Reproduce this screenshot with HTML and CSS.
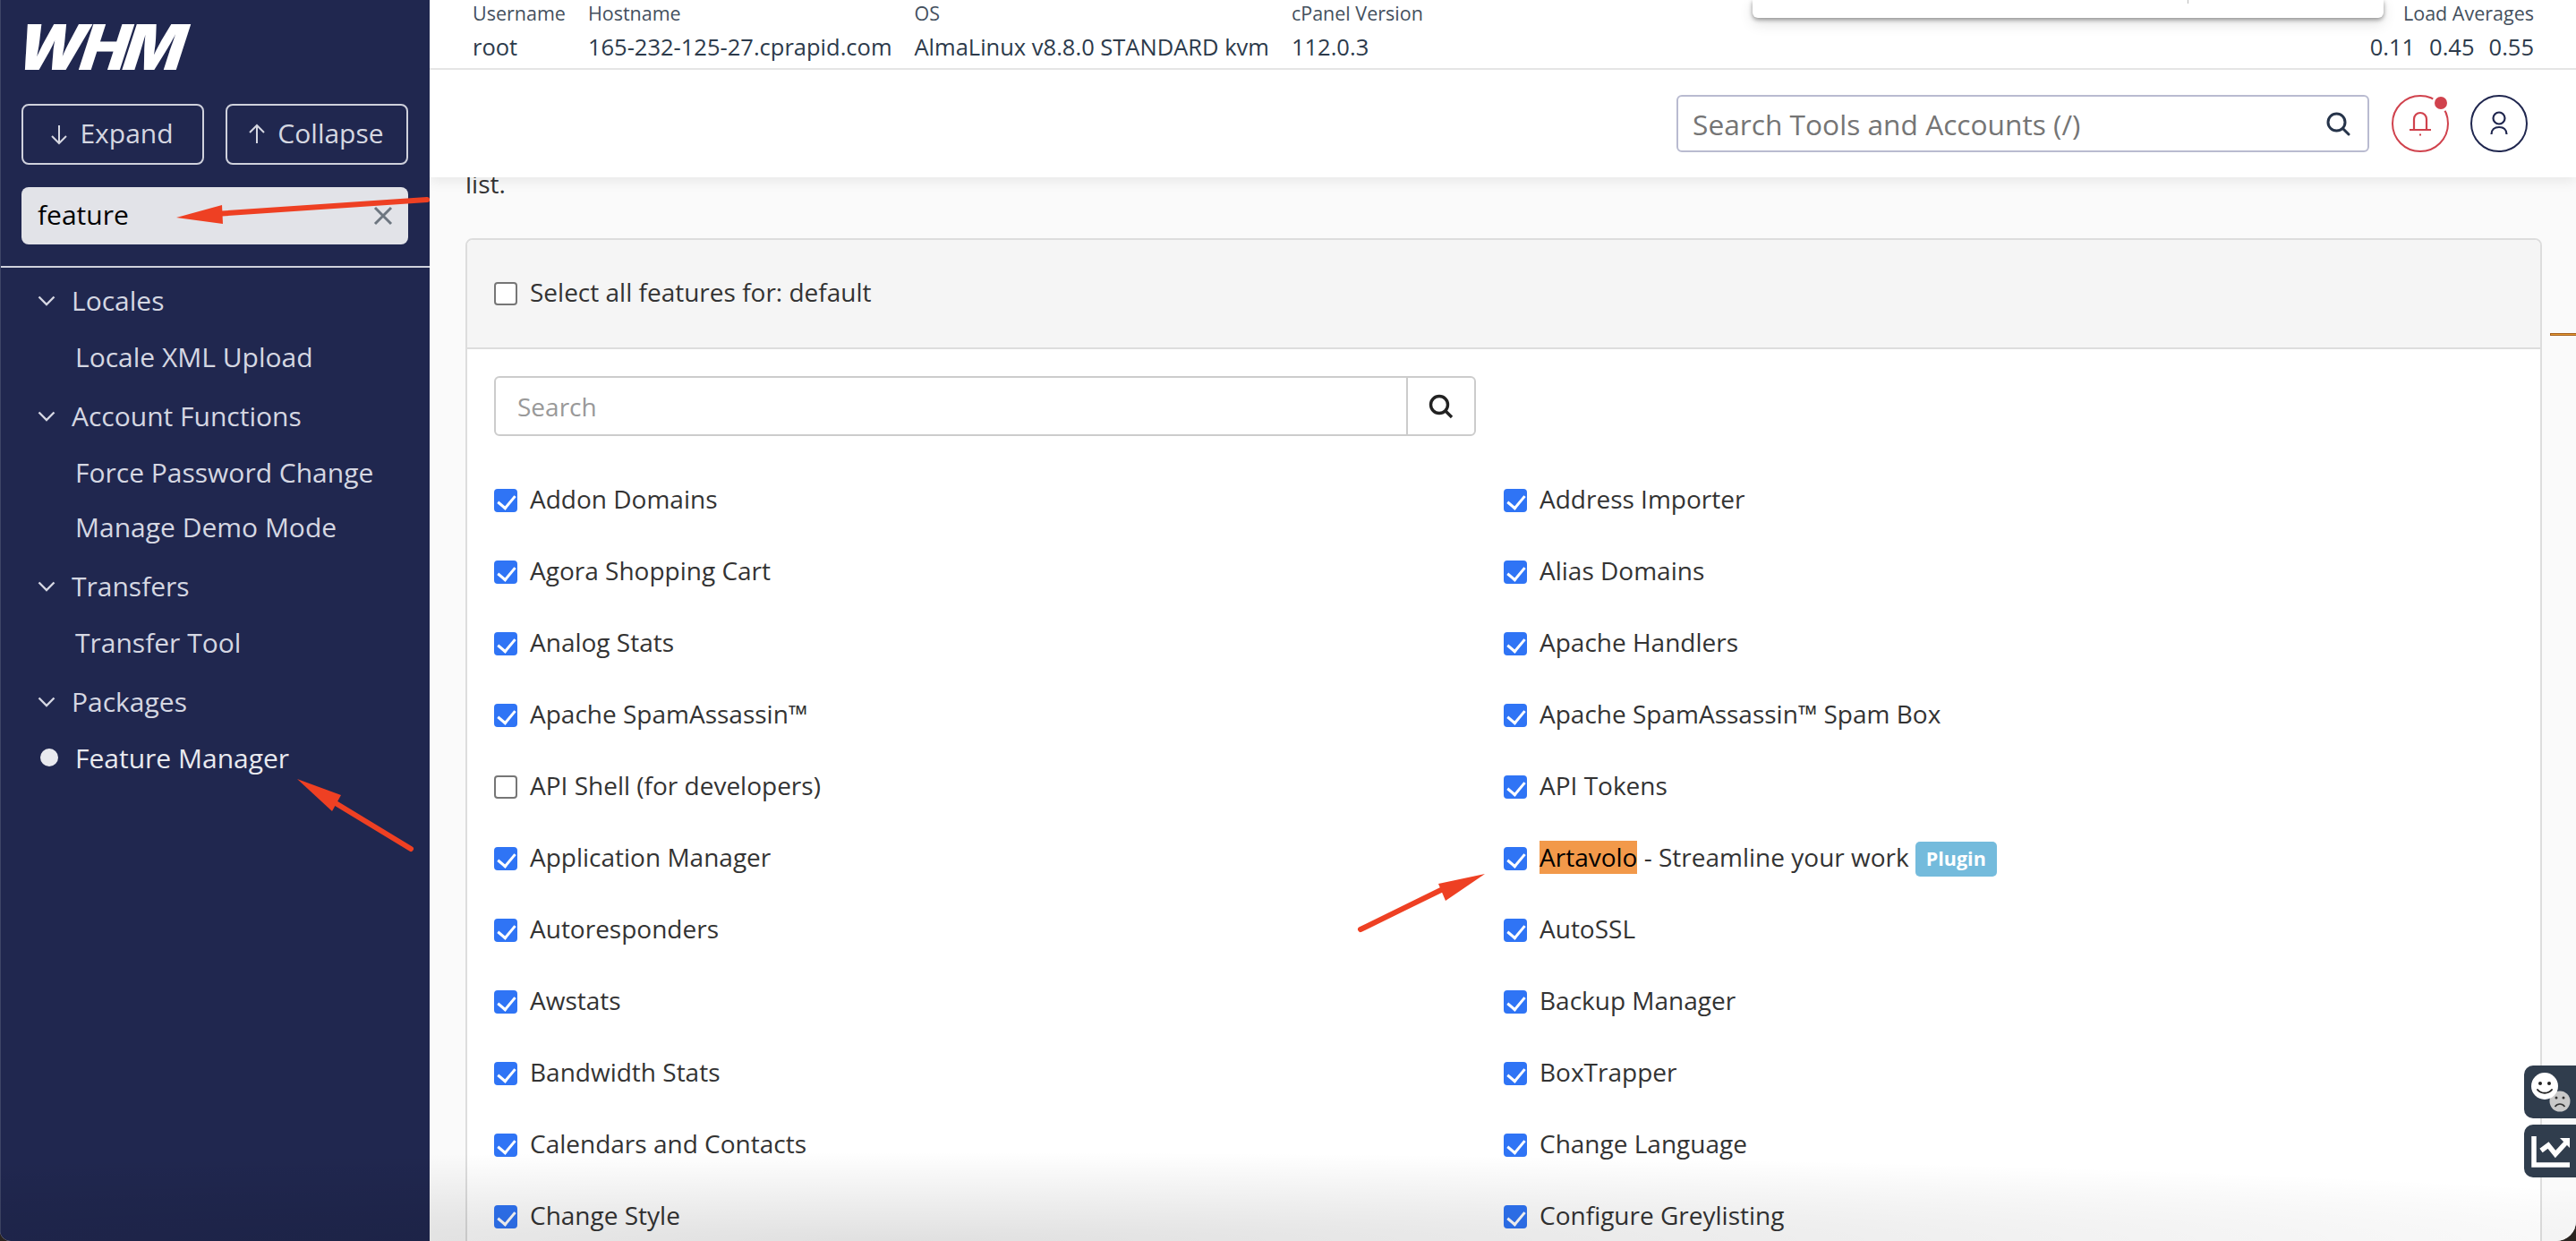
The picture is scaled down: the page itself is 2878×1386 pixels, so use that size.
FILE: index.html
```html
<!DOCTYPE html>
<html lang="en">
<head>
<meta charset="utf-8">
<title>WHM Feature Manager</title>
<link rel="stylesheet" href="styles.css">
</head>
<body>
<div class="app">
  <aside class="sidebar">
    <div class="logo"><span class="logo-mark">WHM</span><span class="reg">®</span></div>
    <div class="tree-buttons">
      <button class="tree-btn" type="button">
        <svg class="btn-icon" viewBox="0 0 20 24"><path d="M10 2v20M2 14l8 8 8-8"/></svg><span class="tree-btn-text">Expand</span>
      </button>
      <button class="tree-btn" type="button">
        <svg class="btn-icon" viewBox="0 0 20 24"><path d="M10 22V2M2 10l8-8 8 8"/></svg><span class="tree-btn-text">Collapse</span>
      </button>
    </div>
    <div class="side-search">
      <span class="side-search-text">feature</span>
      <svg class="clear-icon" viewBox="0 0 22 22"><path d="M2 2l18 18M20 2L2 20"/></svg>
    </div>
    <nav class="nav">
      <div class="nav-group">
        <div class="nav-section"><svg class="chev" viewBox="0 0 20 12"><path d="M1.5 1.5L10 10l8.5-8.5"/></svg>Locales</div>
        <div class="nav-item">Locale XML Upload</div>
      </div>
      <div class="nav-group">
        <div class="nav-section"><svg class="chev" viewBox="0 0 20 12"><path d="M1.5 1.5L10 10l8.5-8.5"/></svg>Account Functions</div>
        <div class="nav-item">Force Password Change</div>
        <div class="nav-item">Manage Demo Mode</div>
      </div>
      <div class="nav-group">
        <div class="nav-section"><svg class="chev" viewBox="0 0 20 12"><path d="M1.5 1.5L10 10l8.5-8.5"/></svg>Transfers</div>
        <div class="nav-item">Transfer Tool</div>
      </div>
      <div class="nav-group">
        <div class="nav-section"><svg class="chev" viewBox="0 0 20 12"><path d="M1.5 1.5L10 10l8.5-8.5"/></svg>Packages</div>
        <div class="nav-item nav-item-active"><span class="bullet"></span>Feature Manager</div>
      </div>
    </nav>
  </aside>

  <div class="main">
    <header class="topbar">
      <div class="info-bar">
        <div class="info-col"><span class="info-label">Username</span><span class="info-value">root</span></div>
        <div class="info-col"><span class="info-label">Hostname</span><span class="info-value">165-232-125-27.cprapid.com</span></div>
        <div class="info-col"><span class="info-label">OS</span><span class="info-value">AlmaLinux v8.8.0 STANDARD kvm</span></div>
        <div class="info-col"><span class="info-label">cPanel Version</span><span class="info-value">112.0.3</span></div>
        <div class="info-col info-load"><span class="info-label">Load Averages</span><span class="info-value load-values"><span>0.11</span><span>0.45</span><span>0.55</span></span></div>
      </div>
      <div class="popover"><span class="popover-tick"></span></div>
      <div class="tools-bar">
        <div class="tools-search">
          <span class="tools-placeholder">Search Tools and Accounts (/)</span>
          <svg class="tools-search-icon" viewBox="0 0 28 28"><circle cx="12.5" cy="12.5" r="9.5"/><path d="M19.5 19.5L26 26"/></svg>
        </div>
        <div class="round-btn round-bell">
          <svg class="round-icon" viewBox="0 0 24 30"><path d="M0 22h24M5 22V10a7 7 0 0 1 14 0v12"/><path d="M11 27.5h2"/></svg>
          <span class="bell-dot"></span>
        </div>
        <div class="round-btn round-user">
          <svg class="round-icon" viewBox="0 0 24 30"><circle cx="12" cy="9" r="6.5"/><path d="M3.5 27c0-5 3.5-8 8.500-8s8.500 3 8.500 8"/></svg>
        </div>
      </div>
    </header>

    <div class="orange-line"></div>

    <div class="content">
      <p class="lead">list.</p>
      <section class="panel">
        <div class="panel-head">
          <label class="check"><input type="checkbox">Select all features for: default</label>
        </div>
        <div class="panel-body">
          <div class="list-search">
            <span class="list-placeholder">Search</span>
            <span class="list-search-btn"><svg class="list-search-icon" viewBox="0 0 28 28"><circle cx="12" cy="12" r="9.5"/><path d="M19 19l7 7"/></svg></span>
          </div>
          <div class="feature-grid">
            <label class="check feature"><input type="checkbox" checked>Addon Domains</label>
            <label class="check feature"><input type="checkbox" checked>Address Importer</label>
            <label class="check feature"><input type="checkbox" checked>Agora Shopping Cart</label>
            <label class="check feature"><input type="checkbox" checked>Alias Domains</label>
            <label class="check feature"><input type="checkbox" checked>Analog Stats</label>
            <label class="check feature"><input type="checkbox" checked>Apache Handlers</label>
            <label class="check feature"><input type="checkbox" checked>Apache SpamAssassin™</label>
            <label class="check feature"><input type="checkbox" checked>Apache SpamAssassin™ Spam Box</label>
            <label class="check feature"><input type="checkbox">API Shell (for developers)</label>
            <label class="check feature"><input type="checkbox" checked>API Tokens</label>
            <label class="check feature"><input type="checkbox" checked>Application Manager</label>
            <label class="check feature"><input type="checkbox" checked><span><mark class="hit">Artavolo</mark> - Streamline your work</span><span class="badge">Plugin</span></label>
            <label class="check feature"><input type="checkbox" checked>Autoresponders</label>
            <label class="check feature"><input type="checkbox" checked>AutoSSL</label>
            <label class="check feature"><input type="checkbox" checked>Awstats</label>
            <label class="check feature"><input type="checkbox" checked>Backup Manager</label>
            <label class="check feature"><input type="checkbox" checked>Bandwidth Stats</label>
            <label class="check feature"><input type="checkbox" checked>BoxTrapper</label>
            <label class="check feature"><input type="checkbox" checked>Calendars and Contacts</label>
            <label class="check feature"><input type="checkbox" checked>Change Language</label>
            <label class="check feature"><input type="checkbox" checked>Change Style</label>
            <label class="check feature"><input type="checkbox" checked>Configure Greylisting</label>
          </div>
        </div>
      </section>
    </div>

    <div class="float-tab float-tab-feedback">
      <svg class="float-icon" viewBox="0 0 58 59">
        <circle cx="40" cy="40" r="11.500" fill="#c9c9c9"/>
        <circle cx="36" cy="36" r="1.500" fill="#333"/><circle cx="44" cy="36" r="1.500" fill="#333"/>
        <path d="M34.500 46c3-4 8-4 11 0" fill="none" stroke="#333" stroke-width="1.600"/>
        <circle cx="23" cy="23" r="15" fill="#fff"/>
        <circle cx="18" cy="20" r="2" fill="#222"/><circle cx="28" cy="20" r="2" fill="#222"/>
        <path d="M15 27c4 5 12 5 16 0" fill="none" stroke="#222" stroke-width="2" stroke-linecap="round"/>
      </svg>
    </div>
    <div class="float-tab float-tab-chart">
      <svg class="float-icon" viewBox="0 0 58 59">
        <path d="M11 13v32h40" fill="none" stroke="#fff" stroke-width="5.500"/>
        <path d="M19 29l8-6 8 10 12-13" fill="none" stroke="#fff" stroke-width="5.500"/>
        <path d="M40 15h11v11z" fill="#fff"/>
      </svg>
    </div>
  </div>

  <div class="bottom-fade"></div>

  <svg class="annotations" viewBox="0 0 2878 1386">
    <path class="arrow-shaft" d="M477 223L240 239"/>
    <path class="arrow-head" d="M197 243L248 229L249 250Z"/>
    <path class="arrow-shaft" d="M459 948L370 894"/>
    <path class="arrow-head" d="M332 870L381 888L371 906Z"/>
    <path class="arrow-shaft" d="M1520 1038L1614 992"/>
    <path class="arrow-head" d="M1659 976L1607 987L1615 1006Z"/>
  </svg>
</div>
</body>
</html>
```
FILE: styles.css
```css
* { box-sizing: border-box; }
html, body { margin: 0; padding: 0; background: #2a2420; }
body { font-family: "Open Sans", "Noto Sans", sans-serif; color: #333; }

.app {
  position: relative;
  display: grid;
  grid-template-columns: 480px 1fr;
  width: 2878px;
  height: 1386px;
  overflow: hidden;
  border-radius: 0 0 22px 12px;
  background: #fafafa;
}

/* Sidebar */
.sidebar {
  background: #20274f;
  border-left: 1px solid #3e4566;
  height: 1386px;
}
.logo {
  display: flex;
  align-items: flex-start;
  height: 116px;
  padding: 12px 0 0 19px;
  color: #fff;
}
.logo-mark {
  display: block;
  font-family: Inter, "Liberation Sans", sans-serif;
  font-weight: 900;
  font-style: italic;
  font-size: 70px;
  line-height: 82px;
  letter-spacing: -4px;
  transform: skewX(-9deg);
}
.reg {
  font-size: 13px;
  line-height: 14px;
  margin: 18px 0 0 -5px;
}
.tree-buttons {
  display: flex;
  gap: 24px;
  padding: 0 24px 0 23px;
}
.tree-btn {
  flex: 1;
  height: 68px;
  display: flex;
  align-items: center;
  justify-content: center;
  gap: 13px;
  background: transparent;
  border: 2px solid #cfd1dc;
  border-radius: 8px;
  color: #d5d7e1;
  font-family: inherit;
  font-size: 30px;
  padding: 0 2px 0 0;
}
.tree-btn-text { padding-bottom: 3px; }
.btn-icon {
  width: 20px;
  height: 24px;
  fill: none;
  stroke: #d5d7e1;
  stroke-width: 2;
}
.side-search {
  display: flex;
  align-items: center;
  justify-content: space-between;
  height: 64px;
  margin: 25px 24px 24px 23px;
  padding: 0 17px 0 18px;
  border-radius: 8px;
  background: #e2e3e8;
}
.side-search-text { font-size: 30px; color: #000; padding-bottom: 3px; }
.clear-icon {
  width: 22px;
  height: 22px;
  fill: none;
  stroke: #6d7680;
  stroke-width: 3;
}
.nav {
  border-top: 2px solid #cfd1dc;
  padding-top: 4px;
}
.nav-group { margin-bottom: 3px; }
.nav-section {
  height: 65px;
  display: flex;
  align-items: center;
  gap: 18px;
  padding-left: 41px;
  font-size: 30px;
  color: #d5d7e2;
}
.chev {
  width: 20px;
  height: 12px;
  fill: none;
  stroke: #d5d7e2;
  stroke-width: 2.4;
}
.nav-item {
  height: 61px;
  display: flex;
  align-items: center;
  padding-left: 83px;
  font-size: 30px;
  color: #d5d7e2;
}
.nav-item-active { position: relative; color: #e9eaef; }
.bullet {
  position: absolute;
  left: 44px;
  top: 20px;
  width: 20px;
  height: 20px;
  border-radius: 50%;
  background: #e9eaef;
}

/* Main column */
.main {
  position: relative;
  display: flex;
  flex-direction: column;
  min-width: 0;
  height: 1386px;
  overflow: hidden;
}
.topbar {
  position: relative;
  z-index: 2;
  flex: none;
  height: 198px;
  background: #fff;
  box-shadow: 0 4px 14px rgba(0, 0, 0, .08);
}
.info-bar {
  display: flex;
  gap: 25px;
  height: 78px;
  padding: 0 47px 0 48px;
  border-bottom: 2px solid #e5e5e5;
  color: #2c3a4b;
}
.info-col {
  display: flex;
  flex-direction: column;
}
.info-label {
  font-size: 21.5px;
  line-height: 30px;
  height: 36px;
  color: #44505e;
}
.info-value {
  font-size: 25.5px;
  line-height: 32px;
}
.info-load {
  margin-left: auto;
  align-items: flex-end;
}
.load-values {
  display: flex;
  gap: 16px;
}
.popover {
  position: absolute;
  left: 1478px;
  top: 0;
  width: 705px;
  height: 20px;
  background: #fff;
  border-radius: 0 0 6px 6px;
  box-shadow: 0 2px 5px rgba(0, 0, 0, .4), 0 6px 16px rgba(0, 0, 0, .12);
}
.popover-tick {
  position: absolute;
  left: 486px;
  top: 0;
  width: 1px;
  height: 4px;
  background: #bbb;
}
.tools-bar {
  display: flex;
  justify-content: flex-end;
  align-items: center;
  gap: 25px;
  padding: 28px 54px 0 0;
}
.tools-search {
  width: 774px;
  height: 64px;
  display: flex;
  align-items: center;
  justify-content: space-between;
  padding: 0 19px 0 16px;
  border: 2px solid #b9bbd0;
  border-radius: 6px;
}
.tools-placeholder { font-size: 31.7px; color: #757575; }
.tools-search-icon {
  width: 28px;
  height: 28px;
  fill: none;
  stroke: #26344a;
  stroke-width: 3;
  stroke-linecap: round;
}
.round-btn {
  position: relative;
  flex: none;
  width: 64px;
  height: 64px;
  border-radius: 50%;
  border: 2px solid;
  display: flex;
  align-items: center;
  justify-content: center;
}
.round-bell { border-color: #d0424d; stroke: #d0424d; margin-right: -1px; }
.round-user { border-color: #20274f; stroke: #20274f; }
.round-icon {
  width: 24px;
  height: 30px;
  fill: none;
  stroke-width: 2.2;
}
.bell-dot {
  position: absolute;
  right: 0;
  top: 0;
  width: 14px;
  height: 14px;
  border-radius: 50%;
  background: #d0424d;
  box-shadow: 0 0 0 3px #fff;
}
.orange-line {
  position: absolute;
  right: 0;
  top: 372px;
  width: 29px;
  height: 3px;
  background: #e2962f;
  border: 1px solid #a5601f;
  border-right: 0;
}

/* Content */
.content {
  flex: 1;
  padding: 0 38px 0 40px;
  background: #fafafa;
}
.lead {
  margin: -12px 0 42px;
  font-size: 28px;
  line-height: 38px;
  color: #333;
}
.panel {
  border: 2px solid #ddd;
  border-radius: 8px 8px 0 0;
  background: #fff;
}
.panel-head {
  height: 122px;
  display: flex;
  align-items: center;
  padding: 0 30px;
  background: #f5f5f5;
  border-bottom: 2px solid #ddd;
  border-radius: 6px 6px 0 0;
}
.panel-body { padding: 30px 30px 0; }
.check {
  display: flex;
  align-items: center;
  padding-bottom: 5px;
  font-size: 28px;
  color: #333;
}
.check input {
  flex: none;
  appearance: none;
  position: relative;
  width: 26px;
  height: 26px;
  margin: 5px 14px 0 0;
  background: #fff;
  border: 2px solid #767676;
  border-radius: 4px;
}
.check input:checked {
  background: #2f74f5;
  border-color: #2f74f5;
}
.check input:checked::after {
  content: "";
  position: absolute;
  left: 6px;
  top: 1px;
  width: 9px;
  height: 16px;
  border: solid #fff;
  border-width: 0 3.5px 3.5px 0;
  transform: rotate(40deg);
}
.list-search {
  display: flex;
  align-items: center;
  width: 1097px;
  height: 67px;
  border: 2px solid #ccc;
  border-radius: 6px;
  padding-left: 24px;
}
.list-placeholder { flex: 1; font-size: 28px; color: #999; }
.list-search-btn {
  flex: none;
  width: 76px;
  height: 100%;
  display: flex;
  align-items: center;
  justify-content: center;
  border-left: 2px solid #ccc;
}
.list-search-icon {
  width: 28px;
  height: 28px;
  fill: none;
  stroke: #222;
  stroke-width: 3.4;
}
.feature-grid {
  display: grid;
  grid-template-columns: 1fr 1fr;
  grid-auto-rows: 80px;
  margin-top: 32px;
}
.hit {
  background: #f2994a;
  color: #000;
  display: inline-block;
  line-height: 37px;
}
.badge {
  margin: 5px 0 0 7px;
  padding: 0 12px;
  height: 39px;
  line-height: 38px;
  border-radius: 5px;
  background: #74bbdc;
  color: #fff;
  font-size: 21.5px;
  font-weight: 700;
}

/* Floating tabs */
.float-tab {
  position: absolute;
  right: 0;
  width: 58px;
  height: 59px;
  background: #303d4d;
  border-radius: 10px 0 0 10px;
  z-index: 3;
}
.float-tab-feedback { top: 1190px; }
.float-tab-chart { top: 1256px; }
.float-icon { display: block; width: 58px; height: 59px; }

/* Screen overlays */
.bottom-fade {
  position: absolute;
  left: 0;
  right: 0;
  bottom: 0;
  height: 110px;
  background: radial-gradient(ellipse 2300px 100px at 35% 100%, rgba(0, 0, 0, .12), rgba(0, 0, 0, 0));
  pointer-events: none;
  z-index: 4;
}
.annotations {
  position: absolute;
  left: 0;
  top: 0;
  width: 2878px;
  height: 1386px;
  pointer-events: none;
  z-index: 5;
}
.arrow-shaft {
  fill: none;
  stroke: #ee4023;
  stroke-width: 6;
  stroke-linecap: round;
}
.arrow-head { fill: #ee4023; }
```
